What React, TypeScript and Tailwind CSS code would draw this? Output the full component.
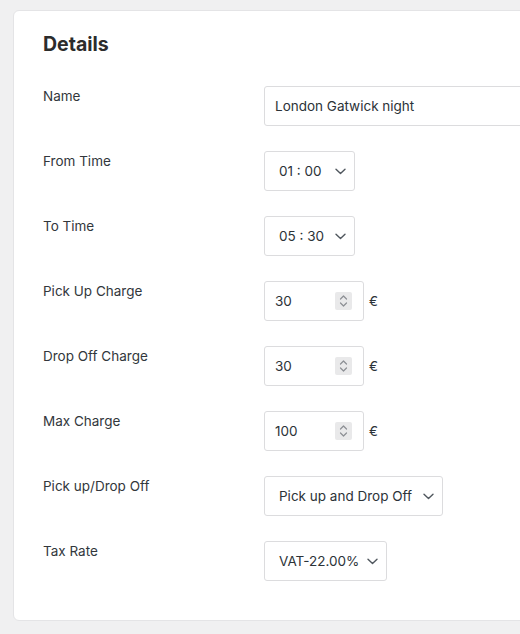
const fontStack = { fontFamily: "Inter, 'Noto Sans', sans-serif" };

const Chevron = () => (
  <svg width="11" height="7" viewBox="0 0 11 7" fill="none" stroke="#50575e" strokeWidth="1.4" strokeLinecap="round" strokeLinejoin="round" className="shrink-0">
    <path d="M1 1.2l4.5 4.3L10 1.2" />
  </svg>
);

const Spinner = () => (
  <span className="flex h-[18px] w-[17px] items-center justify-center rounded-[2px] bg-[#e9e9ea]">
    <svg width="9" height="14" viewBox="0 0 9 14" fill="none" stroke="#8c8f94" strokeWidth="1.2" strokeLinecap="round" strokeLinejoin="round">
      <path d="M1.5 5l3-3 3 3" />
      <path d="M1.5 9l3 3 3-3" />
    </svg>
  </span>
);

const SelectBox = ({ value, width }: { value: string; width: string }) => (
  <div className={`flex h-10 ${width} items-center justify-between gap-2 rounded-[3px] border border-[#dcdcde] bg-white pl-[14px] pr-[8px] text-[13.5px] text-[#2c3338]`}>
    <span className="whitespace-nowrap">{value}</span>
    <Chevron />
  </div>
);

const NumberBox = ({ value }: { value: string }) => (
  <div className="flex items-center gap-[5px]">
    <div className="flex h-10 w-[100px] items-center justify-between rounded-[3px] border border-[#dcdcde] bg-white pl-[10px] pr-[11px] text-[13.5px] text-[#2c3338]">
      <span>{value}</span>
      <Spinner />
    </div>
    <span className="text-[13.5px] text-[#2c3338]">€</span>
  </div>
);

const rows: { label: string; field: JSX.Element }[] = [
  {
    label: "Name",
    field: (
      <div className="flex h-10 w-[320px] items-center rounded-[3px] border border-[#dcdcde] bg-white px-[10px] text-[13.5px] text-[#2c3338]">
        London Gatwick night
      </div>
    ),
  },
  { label: "From Time", field: <SelectBox value="01 : 00" width="w-[91px]" /> },
  { label: "To Time", field: <SelectBox value="05 : 30" width="w-[91px]" /> },
  { label: "Pick Up Charge", field: <NumberBox value="30" /> },
  { label: "Drop Off Charge", field: <NumberBox value="30" /> },
  { label: "Max Charge", field: <NumberBox value="100" /> },
  { label: "Pick up/Drop Off", field: <SelectBox value="Pick up and Drop Off" width="w-[179px]" /> },
  { label: "Tax Rate", field: <SelectBox value="VAT-22.00%" width="w-[123px]" /> },
];

export default function App() {
  return (
    <div className="h-[634px] w-[520px] overflow-hidden bg-[#f0f0f1] pl-[13px] pt-[10px]" style={fontStack}>
      <div className="w-[600px] rounded-[6px] border border-[#e4e4e6] bg-white pb-[39px] pl-[29px] pt-[19px]">
        <h2 className="mb-[28px] text-[19.5px] font-bold leading-[28px] text-[#2c2c2c]">Details</h2>
        <div className="flex flex-col gap-[25px]">
          {rows.map((row) => (
            <div key={row.label} className="flex">
              <div className="w-[221px] shrink-0 text-[13.5px] leading-5 text-[#32373c]">{row.label}</div>
              {row.field}
            </div>
          ))}
        </div>
      </div>
    </div>
  );
}
